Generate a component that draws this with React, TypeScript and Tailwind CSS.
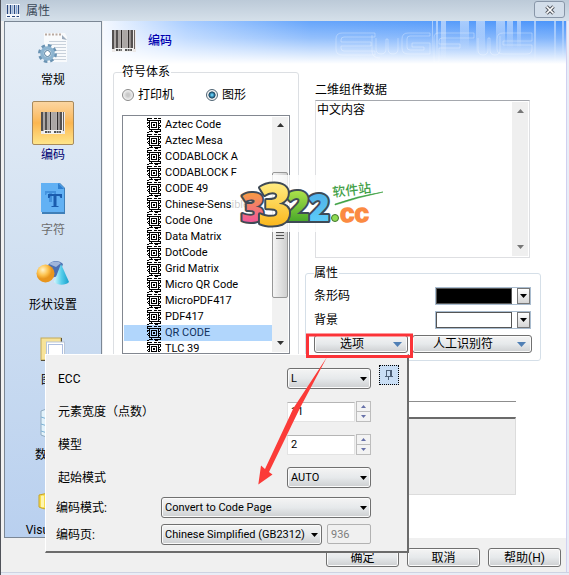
import { useState } from 'react';
import type { ReactNode } from 'react';
import clsx from 'clsx';

const SYMBOLS = [
  'Aztec Code',
  'Aztec Mesa',
  'CODABLOCK A',
  'CODABLOCK F',
  'CODE 49',
  'Chinese-Sensible',
  'Code One',
  'Data Matrix',
  'DotCode',
  'Grid Matrix',
  'Micro QR Code',
  'MicroPDF417',
  'PDF417',
  'QR CODE',
  'TLC 39',
];

function TitleIcon() {
  return (
    <svg width="14" height="14" viewBox="0 0 14 14" aria-hidden="true">
      <rect width="14" height="14" fill="#f4f8fd" />
      <path d="M1.5 1v9M4.5 1v9M8.5 1v9M12.5 1v9" stroke="#27477d" strokeWidth="1.4" />
      <path d="M6.3 1v9M10.5 1v9" stroke="#7fa3d4" />
      <path d="M1 12.5h3M6 12.5h3M10.5 12.5h2.5" stroke="#27477d" />
    </svg>
  );
}

function BarcodeIcon() {
  return (
    <svg width="24" height="22" viewBox="0 0 24 22" aria-hidden="true">
      <rect width="24" height="22" fill="#ece9e8" />
      <path d="M1 0v19M5 0v19M9.5 0v19M16.5 0v19M20 0v19" stroke="#2f2b2b" strokeWidth="1.6" />
      <path d="M3 0v19M7 0v19M12 0v19M14 0v19M18.2 0v19M22.5 0v19" stroke="#6b6463" />
      <rect x="3" y="18" width="18" height="4" fill="#f3f3f3" />
      <path d="M4 20h6M13 20h7" stroke="#555" strokeWidth="2" strokeDasharray="2 .6" />
    </svg>
  );
}

function GeneralIcon() {
  return (
    <svg width="32" height="34" viewBox="0 0 32 34" aria-hidden="true">
      <path d="M7 2h21l2 4v25H7z" fill="#f8fafc" />
      <path d="M8 3.5h17" stroke="#b9a9a0" strokeWidth="2" strokeDasharray="2 1.5" />
      <path d="M25 4l5 5-5-1z" fill="#9cabbc" />
      <path d="M12 10.500h17M14 13.500h15M17 16.500h12M18 19.500h11M18 22.500h11M18 25.500h11M16 28.500h13" stroke="#c8d1db" />
      <circle cx="10.500" cy="22.500" r="8" fill="none" stroke="#6a93b3" strokeWidth="3" strokeDasharray="3.500 2.800" />
      <circle cx="10.500" cy="22.500" r="5.500" fill="#e6f0f7" stroke="#8db4d0" strokeWidth="3.500" />
      <circle cx="10.500" cy="22.500" r="3" fill="#fff" stroke="#4c7899" />
    </svg>
  );
}

function FontIcon() {
  return (
    <svg width="26" height="32" viewBox="0 0 26 32" aria-hidden="true">
      <path d="M2 1h18l5 5v26H2z" fill="#3f7fb8" />
      <path d="M1 1h18l5 5v24H1z" fill="#62b1f4" />
      <path d="M18 1v6h6z" fill="#2f7fd0" />
      <path d="M5 9h11v4h-1l-1-2h-2v9h-3v-9H7l-1 2H5z" fill="#4291dd" />
      <path d="M8 12h14v4h-1.500l-1-2h-3v10h2v1h-7v-1h2V14h-3l-1 2H8z" fill="#1a5cae" />
    </svg>
  );
}

function ShapesIcon() {
  return (
    <svg width="34" height="26" viewBox="0 0 34 26" aria-hidden="true">
      <defs>
        <radialGradient id="ball" cx="35%" cy="30%">
          <stop offset="0" stopColor="#fff3c9" />
          <stop offset=".6" stopColor="#fdc34f" />
          <stop offset="1" stopColor="#e8951d" />
        </radialGradient>
        <linearGradient id="cone">
          <stop offset="0" stopColor="#d3f6fd" />
          <stop offset=".5" stopColor="#56cdea" />
          <stop offset="1" stopColor="#179fcb" />
        </linearGradient>
      </defs>
      <path d="M12 5c4-5 11-5 15-1l-4 12-9 2z" fill="#4b6fb1" />
      <path d="M13 4c4-3 8-3 12-1l-5 4z" fill="#9fb5da" />
      <circle cx="9.500" cy="13.500" r="9" fill="url(#ball)" />
      <path d="M25 4l8 18c-3 3.500-12 3.500-15 0z" fill="url(#cone)" />
    </svg>
  );
}

function BorderIcon() {
  return (
    <svg width="26" height="28" viewBox="0 0 26 28" aria-hidden="true">
      <rect x="1" y="4" width="20" height="22" fill="#f7e39a" stroke="#c4a956" />
      <path d="M1 26.500h20M21.500 4v5" stroke="#58503a" />
      <rect x="6.500" y="8" width="18" height="20" fill="#fff" stroke="#b9c6d8" />
      <rect x="8.500" y="10.500" width="14" height="16" fill="none" stroke="#5d7fc0" strokeDasharray="1 1" />
    </svg>
  );
}

function DatabaseIcon() {
  return (
    <svg width="26" height="32" viewBox="0 0 26 32" aria-hidden="true">
      <path d="M1 4q12-6 24 0v24q-12 6-24 0z" fill="#e2f2fb" stroke="#90abc0" />
      <path d="M1 10q12 5 24 0M1 17q12 5 24 0M1 24q12 5 24 0" fill="none" stroke="#7fb2d4" />
    </svg>
  );
}

function QueryIcon() {
  return (
    <svg width="30" height="30" viewBox="0 0 30 30" aria-hidden="true">
      <path d="M8 14V5q0-4 5-4h8" fill="none" stroke="#8098ba" strokeWidth="1.500" />
      <path d="M1 12q7-3 15 0v12q-8 4-15 0z" fill="#f7dc4d" stroke="#c5a32a" />
      <path d="M3 13q2-1 3 0v11H3z" fill="#fdf4b0" />
    </svg>
  );
}

const NAV: { label: string; icon: ReactNode; state?: 'active' | 'disabled' }[] = [
  { label: '常规', icon: <GeneralIcon /> },
  { label: '编码', icon: <BarcodeIcon />, state: 'active' },
  { label: '字符', icon: <FontIcon />, state: 'disabled' },
  { label: '形状设置', icon: <ShapesIcon /> },
  { label: '图形', icon: <BorderIcon /> },
  { label: '数据源', icon: <DatabaseIcon /> },
  { label: 'VisualSQL', icon: <QueryIcon /> },
];

function MatrixIcon() {
  return (
    <svg width="14" height="15" viewBox="0 0 14 15" shapeRendering="crispEdges" aria-hidden="true" className="shrink-0">
      <path
        d="M0 .5h5M7 .5h3M11 .5h3M0 1.500h1M0 2.500h14M2.500 2v10M11.500 2v10M2 11.500h12M0 4.500h3M0 5.500h1M1 7.500h2M0 8.500h1M1 9.500h2M13.500 3v2M12 5.500h1M12 7.500h2M13 8.500h1M12 9.500h1M2 13.500h4M7 13.500h7M4 12.500h1M13.500 12v2M0 14.500h2M8 14.500h3M4 4.500h6M4 9.500h6M4.500 4v6M9.500 4v6M6 6.500h2M6 7.500h2"
        stroke="#000"
        fill="none"
      />
    </svg>
  );
}

function Triangle({ up, className }: { up?: boolean; className: string }) {
  return (
    <svg width="9" height="5" viewBox="0 0 9 5" aria-hidden="true" className={clsx('pointer-events-none shrink-0', className)}>
      <path d={up ? 'M0 5h9L4.500 0z' : 'M0 0h9L4.500 5z'} fill="currentColor" />
    </svg>
  );
}

function BannerArt() {
  return (
    <svg width="240" height="43" viewBox="0 0 240 43" aria-hidden="true" className="shrink-0">
      <defs>
        <linearGradient id="stripe" x1="0" y1="0" x2="0" y2="1">
          <stop offset="0" stopColor="#fff" stopOpacity=".5" />
          <stop offset="1" stopColor="#fff" stopOpacity="0" />
        </linearGradient>
      </defs>
      <g fill="url(#stripe)">
        <rect x="106" width="1" height="36" />
        <rect x="110" width="2" height="40" />
        <rect x="115" width="5" height="40" />
        <rect x="134" width="9" height="28" />
        <rect x="150" width="9" height="34" />
        <rect x="170" width="9" height="28" />
        <rect x="181" width="6" height="28" />
        <rect x="191" width="4" height="28" />
        <rect x="208" width="2" height="43" />
        <rect x="228" width="2" height="43" />
        <rect x="236" width="2" height="38" />
      </g>
      <g fill="none" stroke="#fff" strokeOpacity=".3" strokeLinejoin="round">
        <path d="M49 12H16q-6 0-6 6v10q0 6 6 6h33v-4H18q-3 0-3-3v-2h30v-4H15v-2q0-3 3-3h31z" />
        <path d="M50 17v11q0 5 5 5t5-5V18h2v10q0 5 5 5t5-5V17M46 14v16q0 7 8 7" />
        <path d="M104 12H82q-6 0-6 6v9q0 6 6 6h22V22H86v4h12v3H84q-3 0-3-3v-8q0-3 3-3h20z" />
        <path d="M148 12h-36q-4 0-4 5v24h5V27h21v-4h-21v-3q0-3 3-3h32z" />
        <path d="M152 17v12q0 5 5 5t5-5V17h2v12q0 5 5 5t5-5V15" />
        <path d="M206 12h-29q-6 0-6 6v10q0 5 6 5h24q5 0 5-5v-4h-29v-4h29z" />
      </g>
    </svg>
  );
}

function Banner() {
  return (
    <header className="flex h-[43px] items-center overflow-hidden bg-[linear-gradient(to_bottom,rgba(255,255,255,0),rgba(255,255,255,0.3)_40%,#fff),linear-gradient(to_right,#f4f8ff,#a9cdff_18%,#66a5fb_45%,#4a94fa)] pl-[9px]">
      <div className="-mt-1 flex items-center gap-3">
        <BarcodeIcon />
        <h1 className="text-[12px] font-medium text-[#0000b0]">编码</h1>
      </div>
      <div className="ml-auto">
        <BannerArt />
      </div>
    </header>
  );
}

function Sidebar() {
  return (
    <nav className="mr-px flex w-[98px] shrink-0 flex-col gap-3.5 border border-[#7b8795] bg-linear-to-b from-[#e8eff7] via-[#cfdff1] to-[#b9d0ef] pt-1">
      {NAV.map(({ label, icon, state }) => (
        <button key={label} type="button" disabled={state === 'disabled'} className="flex w-full flex-col items-center gap-[3px]">
          <span
            className={clsx(
              'flex h-11 w-[42px] items-center justify-center rounded-xs border',
              state === 'active'
                ? 'border-[#a88a5c] bg-linear-to-b from-[#fbd5a0] via-[#fbb650] to-[#fee589]'
                : 'border-transparent',
            )}
          >
            {icon}
          </span>
          <span
            className={clsx(
              'leading-[14px]',
              state === 'active' && 'text-[#000070]',
              state === 'disabled' && 'text-[#6d6d6d]',
            )}
          >
            {label}
          </span>
        </button>
      ))}
    </nav>
  );
}

function Radio({ label, checked, onChange }: { label: string; checked: boolean; onChange: () => void }) {
  return (
    <label className="flex w-[84px] items-center gap-1">
      <input
        type="radio"
        name="source"
        checked={checked}
        onChange={onChange}
        className="size-3 appearance-none rounded-full border border-[#8a8a8a] bg-[radial-gradient(circle,#c9c9c9_20%,#f2f2f2_70%)] checked:border-[#4f6473] checked:bg-[radial-gradient(circle,#5fc6ee_10%,#12405e_45%,#f2f2f2_55%)]"
      />
      {label}
    </label>
  );
}

function SymbologyPanel() {
  const [source, setSource] = useState('graphic');
  const [symbol, setSymbol] = useState('QR CODE');
  return (
    <fieldset className="mb-10 w-[186px] shrink-0 rounded-[3px] border border-[#dcdfe3] px-2">
      <legend className="pr-px leading-4">符号体系</legend>
      <div className="flex h-[30px] items-center">
        <Radio label="打印机" checked={source === 'printer'} onChange={() => setSource('printer')} />
        <Radio label="图形" checked={source === 'graphic'} onChange={() => setSource('graphic')} />
      </div>
      <div className="mt-[5px] flex h-[239px] border border-[#828790] bg-white p-px">
        <ul className="min-w-0 flex-1 overflow-hidden text-[11px]">
          {SYMBOLS.map((name) => (
            <li key={name}>
              <button
                type="button"
                onClick={() => setSymbol(name)}
                className={clsx(
                  'flex h-4 w-full items-center gap-1 pl-[23px] text-left leading-4 whitespace-nowrap',
                  name === symbol && 'bg-[#b1d6fc] text-[#12325c]',
                )}
              >
                <MatrixIcon />
                {name}
              </button>
            </li>
          ))}
        </ul>
        <div className="flex w-4 shrink-0 flex-col items-center bg-[#f1f1f1]">
          <Triangle up className="mt-1.5 h-1 w-[7px] text-[#333]" />
          <div className="mt-[45px] flex h-[126px] w-full items-center justify-center rounded-[2px] border border-[#979797] bg-linear-to-r from-[#f5f5f5] to-[#cfcfcf]">
            <span className="h-[7px] w-2 border-y border-[#555] bg-[linear-gradient(#ddd_40%,#555_40%_60%,#ddd_60%)]" />
          </div>
          <Triangle className="mt-auto mb-[7px] h-1 w-[7px] text-[#333]" />
        </div>
      </div>
    </fieldset>
  );
}

function ColorPicker({ label, swatch }: { label: string; swatch: string }) {
  return (
    <div className="flex h-[18px] items-center justify-between pr-px">
      <span>{label}</span>
      <button type="button" aria-label={label} className="flex h-[18px] w-24 justify-between border border-[#a9bccf] bg-white">
        <span className={clsx('h-4 w-[76px] border border-[#555]', swatch)} />
        <span className="flex h-4 w-[13px] items-center justify-center border border-[#777] bg-linear-to-b from-white to-[#d5d5d5]">
          <Triangle className="h-1 w-[7px] text-black" />
        </span>
      </button>
    </div>
  );
}

const BUTTON =
  'rounded-[3px] border border-[#707070] bg-linear-to-b from-[#f4f4f4] via-[#e6e9eb] to-[#cdcfd1] shadow-[inset_0_0_0_1px_#fbfbfb]';

function MenuButton({ children, className }: { children: ReactNode; className: string }) {
  return (
    <button type="button" className={clsx(BUTTON, 'flex h-[18px] items-center gap-1 pr-[5px]', className)}>
      <span className="flex-1 text-center leading-4">{children}</span>
      <Triangle className="h-[5px] w-[9px] text-[#4f7fb5]" />
    </button>
  );
}

function DataPanel() {
  const [text, setText] = useState('中文内容');
  return (
    <div className="min-w-0 flex-1 pt-[18px] pr-[25px]">
      <div className="mr-[11px] ml-[10px]">
        <label htmlFor="data" className="block leading-4">
          二维组件数据
        </label>
        <div className="mt-0.5 flex h-[158px] border border-[#dedfe2] border-t-[#a5a8ae] bg-white p-px">
          <textarea
            id="data"
            value={text}
            onChange={(e) => setText(e.target.value)}
            className="min-w-0 flex-1 resize-none overflow-hidden leading-4 outline-none"
          />
          <div className="flex w-4 shrink-0 flex-col items-center justify-between bg-[#efefef] py-[7px]">
            <Triangle up className="h-1 w-[7px] text-[#777]" />
            <Triangle className="h-1 w-[7px] text-[#777]" />
          </div>
        </div>
      </div>
      <fieldset className="mt-[7px] rounded-[3px] border border-[#d5dfe8] px-2 pb-[7px]">
        <legend className="pr-px leading-4">属性</legend>
        <div className="flex flex-col gap-1.5 pt-1.5">
          <ColorPicker label="条形码" swatch="bg-black" />
          <ColorPicker label="背景" swatch="bg-white" />
          <div className="flex gap-1">
            <MenuButton className="w-[94px]">选项</MenuButton>
            <MenuButton className="flex-1">人工识别符</MenuButton>
          </div>
        </div>
      </fieldset>
      <div className="mt-10 mr-[25px] ml-[10px]">
        <input aria-label="人工识别符" className="block h-4 w-full border-t border-[#8d8d8d] bg-white outline-none" />
        <div className="h-[78px] border border-t-2 border-[#dcdcdc] border-t-[#6a6a6a] bg-[#eeeeee]" />
      </div>
    </div>
  );
}

function Select({ label, options, className }: { label: string; options: string[]; className: string }) {
  return (
    <span className={clsx('grid items-center text-[11px]', className)}>
      <select
        id={label}
        aria-label={label}
        className={clsx(BUTTON, 'col-start-1 row-start-1 h-[21px] w-full appearance-none pr-3.5 pl-[3px]')}
      >
        {options.map((option) => (
          <option key={option}>{option}</option>
        ))}
      </select>
      <Triangle className="col-start-1 row-start-1 mr-1 h-1 w-[7px] justify-self-end text-black" />
    </span>
  );
}

function Spinner({ id, initial }: { id: string; initial: number }) {
  const [value, setValue] = useState(initial);
  const step = 'flex h-[9px] w-full items-center justify-center bg-[#f3f3f3]';
  return (
    <span className="flex h-5 w-[84px] items-center gap-px">
      <input
        id={id}
        inputMode="numeric"
        value={value}
        onChange={(e) => setValue(Number(e.target.value) || 0)}
        className="h-5 min-w-0 flex-1 border border-[#e3e3e3] border-t-[#b5b5b5] bg-white px-[3px] text-[11px] outline-none"
      />
      <span className="flex w-[15px] flex-col gap-px border border-[#bdbdbd] bg-[#bdbdbd]">
        <button type="button" aria-label="增加" onClick={() => setValue(value + 1)} className={step}>
          <Triangle up className="h-[3px] w-[5px] text-[#6670a8]" />
        </button>
        <button type="button" aria-label="减少" onClick={() => setValue(value - 1)} className={step}>
          <Triangle className="h-[3px] w-[5px] text-[#6670a8]" />
        </button>
      </span>
    </span>
  );
}

function OptionRow({ id, label, compact, children }: { id: string; label: string; compact?: boolean; children: ReactNode }) {
  return (
    <div className={clsx('flex items-center justify-between', compact ? 'h-[27px] pl-[10px]' : 'h-[33px] pl-3')}>
      <label htmlFor={id}>{label}</label>
      {children}
    </div>
  );
}

function OptionsPopup() {
  return (
    <section className="absolute top-[354px] left-[44px] w-[364px] border border-t-white border-r-2 border-b-2 border-[#6b6b6b] border-l-white bg-[#f0f0f0] pt-[7px] pr-9 pb-[3px]">
      <OptionRow id="ECC" label="ECC">
        <Select label="ECC" options={['L', 'M', 'Q', 'H']} className="w-[84px]" />
      </OptionRow>
      <OptionRow id="width" label="元素宽度（点数）">
        <Spinner id="width" initial={11} />
      </OptionRow>
      <OptionRow id="model" label="模型">
        <Spinner id="model" initial={2} />
      </OptionRow>
      <OptionRow id="起始模式" label="起始模式">
        <Select label="起始模式" options={['AUTO']} className="w-[84px]" />
      </OptionRow>
      <OptionRow id="编码模式" label="编码模式:" compact>
        <Select label="编码模式" options={['Convert to Code Page']} className="w-[210px]" />
      </OptionRow>
      <OptionRow id="编码页" label="编码页:" compact>
        <span className="flex w-[210px] gap-[5px]">
          <Select label="编码页" options={['Chinese Simplified (GB2312)']} className="flex-1" />
          <input
            aria-label="代码页"
            disabled
            defaultValue="936"
            className="h-5 w-11 rounded-[2px] border border-[#b2b2b2] bg-[#f0f0f0] px-[3px] text-[11px] text-[#7d7d7d]"
          />
        </span>
      </OptionRow>
      <button
        type="button"
        aria-label="固定"
        className="absolute top-[10px] right-[8px] flex size-5 items-center justify-center border border-dotted border-black bg-[#c9def5]"
      >
        <svg width="10" height="12" viewBox="0 0 10 12" aria-hidden="true" shapeRendering="crispEdges">
          <path d="M2 1.500h6M2.500 1v6M7.500 1v6M6.500 1v6M1 7.500h8M4.500 8v3" stroke="#4d6078" fill="none" />
        </svg>
      </button>
    </section>
  );
}

function Watermark() {
  return (
    <svg
      width="152"
      height="57"
      viewBox="0 0 152 57"
      role="img"
      aria-label="3322.cc 软件站"
      className="pointer-events-none absolute top-[175px] left-[231px]"
    >
      <defs>
        <linearGradient id="pink" x1="0" y1="0" x2="0" y2="1">
          <stop offset=".2" stopColor="#f7a23c" />
          <stop offset=".8" stopColor="#f0569b" />
        </linearGradient>
        <linearGradient id="gold" x1="0" y1="0" x2="0" y2="1">
          <stop offset=".2" stopColor="#fff08a" />
          <stop offset=".8" stopColor="#fbb71c" />
        </linearGradient>
        <linearGradient id="lime" x1="0" y1="0" x2="0" y2="1">
          <stop offset=".2" stopColor="#b6e84e" />
          <stop offset=".8" stopColor="#48a829" />
        </linearGradient>
        <linearGradient id="sky" x1="0" y1="0" x2="0" y2="1">
          <stop offset=".2" stopColor="#4fb0e8" />
          <stop offset=".8" stopColor="#5ccbf8" />
        </linearGradient>
      </defs>
      <rect width="152" height="57" fill="#fff" fillOpacity=".8" />
      <g
        className="font-['Open_Sans','Liberation_Sans',sans-serif] font-extrabold"
        stroke="#3f4a55"
        strokeWidth="4"
        strokeLinejoin="round"
        paintOrder="stroke"
      >
        <text x="9" y="47" fontSize="40" fill="url(#pink)">3</text>
        <text x="76" y="46" fontSize="37" fill="url(#sky)">2</text>
        <text x="53" y="46" fontSize="42" fill="url(#lime)">2</text>
        <text x="26" y="50" fontSize="57" fill="url(#gold)">3</text>
      </g>
      <circle cx="103" cy="43" r="3.500" fill="#8fdc53" stroke="#41742f" />
      <text
        x="108"
        y="47"
        fontSize="26"
        fill="#fb8a42"
        stroke="#fb8a42"
        strokeWidth="1.500"
        className="font-['Liberation_Sans',sans-serif] font-bold"
      >
        cc
      </text>
      <text
        x="101"
        y="22"
        fontSize="13"
        fill="#43a047"
        transform="rotate(-7 101 22)"
        className="font-['Noto_Sans_CJK_SC',sans-serif] font-medium"
      >
        软件站
      </text>
      <path d="M103 29q22-8 48-12q-24 5-48 13z" fill="#3aa03f" stroke="#3aa03f" strokeWidth=".6" />
    </svg>
  );
}

function Callout() {
  return (
    <svg
      width="160"
      height="160"
      viewBox="0 0 160 160"
      aria-hidden="true"
      className="pointer-events-none absolute top-[330px] left-[255px]"
    >
      <rect x="51.500" y="5" width="104" height="21.500" fill="none" stroke="#fb3338" strokeWidth="3" />
      <path d="M71 27L37.500 78 9 139l-4-3.500-2.700 19 14.200-10-3.500-2.500L44 78z" fill="#fb3b38" />
    </svg>
  );
}

export default function App() {
  return (
    <div className="relative flex min-h-screen flex-col border-l border-[#50535a] bg-[#e9edf6] font-['Roboto','Noto_Sans_CJK_SC',sans-serif] text-[12px] leading-4 text-black">
      <div className="flex h-[21px] shrink-0 items-center gap-1.5 bg-linear-to-b from-[#bccad8] to-[#d5e0ea] pr-1 pl-[5px]">
        <TitleIcon />
        <span className="leading-4 text-[#3a4756]">属性</span>
        <button
          type="button"
          aria-label="关闭"
          className="mb-0.5 ml-auto flex h-[17px] w-[31px] items-center justify-center rounded-[3px] border border-[#8896a8] bg-[#d3deea]"
        >
          <svg width="12" height="10" viewBox="0 0 12 10" aria-hidden="true">
            <path d="M2.500 1.500l7 7M9.500 1.500l-7 7" stroke="#50555e" strokeWidth="3.600" />
            <path d="M2.500 1.500l7 7M9.500 1.500l-7 7" stroke="#fff" strokeWidth="1.700" />
          </svg>
        </button>
      </div>
      <div className="mr-0.5 flex grow flex-col border-r border-[#d0d0f0] bg-[#f0f0f0] pl-[3px]">
        <div className="flex">
          <Sidebar />
          <main className="flex min-w-0 flex-1 flex-col bg-white">
            <Banner />
            <div className="flex flex-1 gap-1.5 pl-[10px]">
              <SymbologyPanel />
              <DataPanel />
            </div>
          </main>
        </div>
        <footer className="flex justify-end gap-2 pt-[10px] pr-[5px] pb-[5px]">
          {['确定', '取消', '帮助(H)'].map((name) => (
            <button key={name} type="button" className={clsx(BUTTON, 'h-[19px] w-[73px] leading-4')}>
              {name}
            </button>
          ))}
        </footer>
      </div>
      <div className="h-[3px] shrink-0 border-t border-[#cdd3e2]" />
      <OptionsPopup />
      <Watermark />
      <Callout />
    </div>
  );
}
